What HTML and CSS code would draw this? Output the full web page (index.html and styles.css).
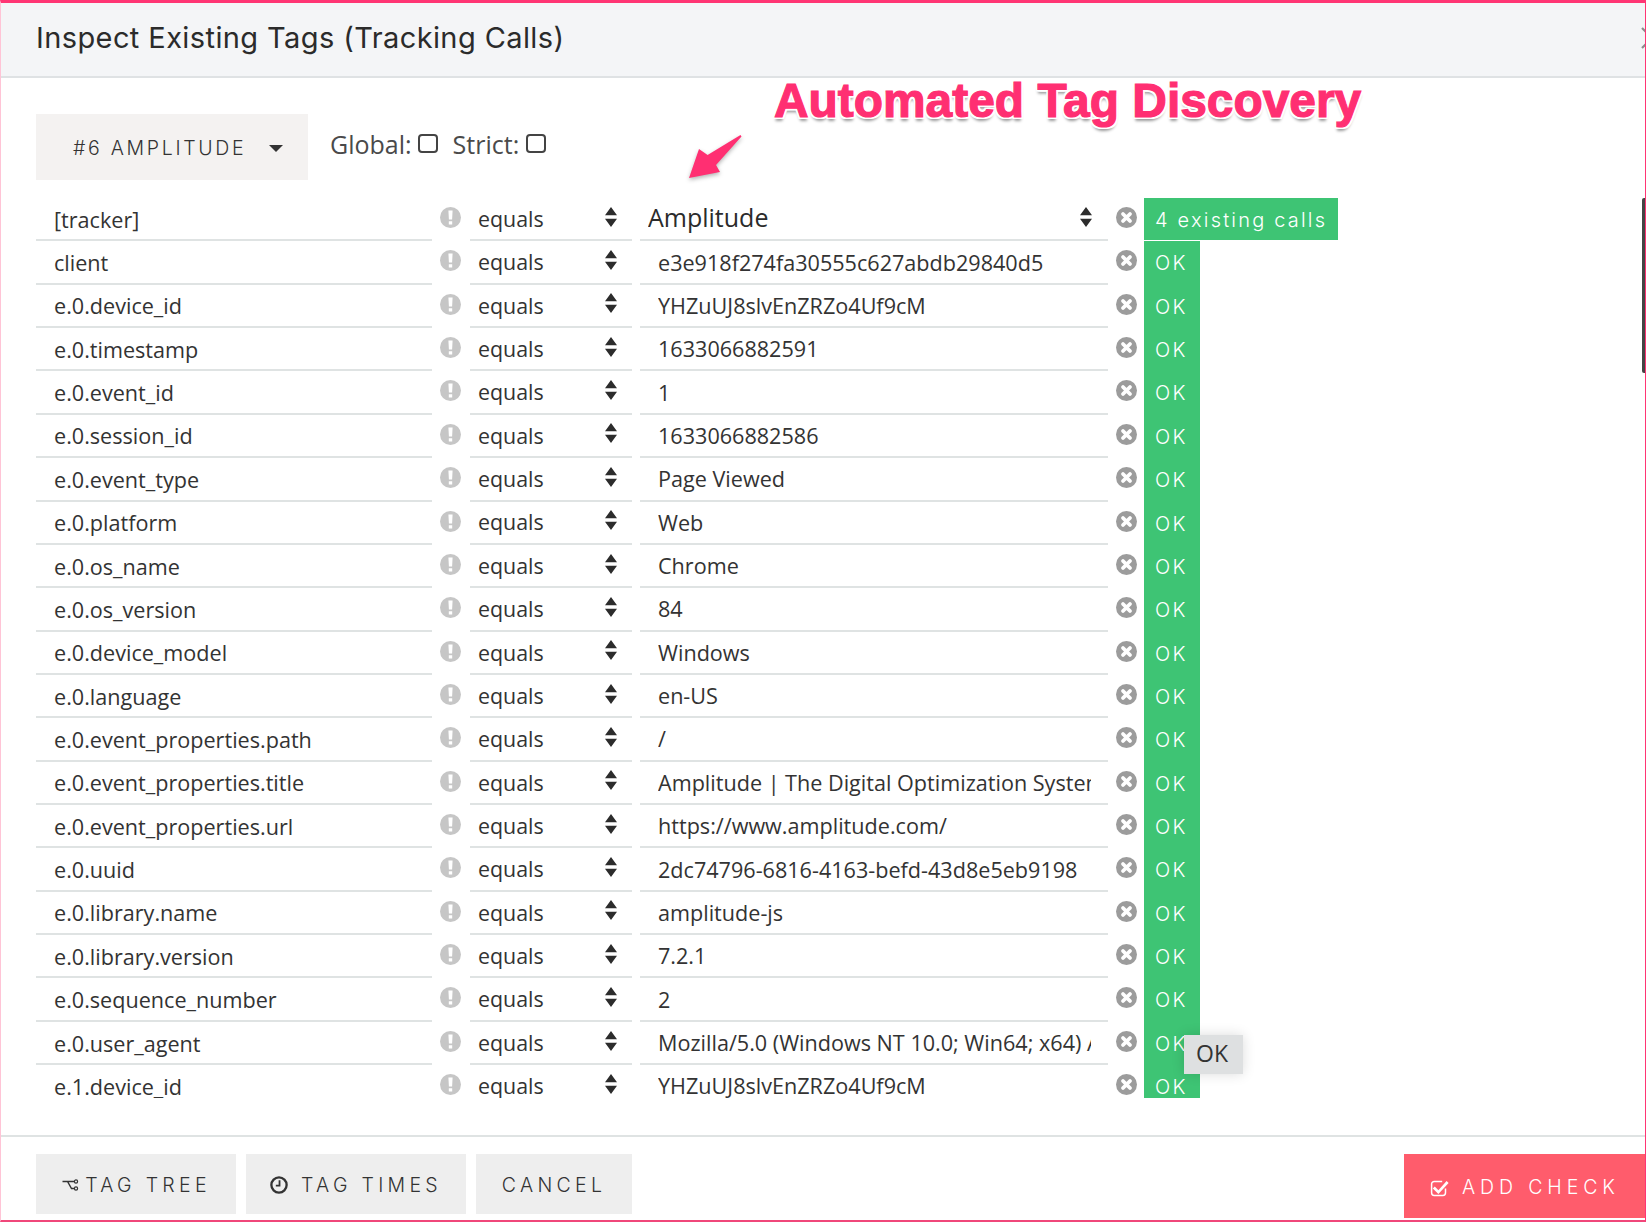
FILE: index.html
```html
<!DOCTYPE html>
<html lang="en">
<head>
<meta charset="utf-8">
<title>Inspect Existing Tags</title>
<link rel="stylesheet" href="styles.css">
</head>
<body>
<svg class="defs" width="0" height="0" aria-hidden="true">
  <symbol id="warn" viewBox="0 0 21 21"><circle cx="10.5" cy="10.5" r="10.5" fill="#c6c6c6"/><path d="M8.4 3.4h4.2l-.5 9.2H8.9zM8.8 14.2h3.4v3.4H8.8z" fill="#fff"/></symbol>
  <symbol id="del" viewBox="0 0 21 21"><circle cx="10.5" cy="10.5" r="10.5" fill="#9c9c9c"/><path d="M7 7l7 7M14 7l-7 7" stroke="#fff" stroke-width="3.8" stroke-linecap="round"/></symbol>
  <symbol id="sort" viewBox="0 0 12 20"><path d="M6 0l6 8.2H0zM0 11.8h12L6 20z" fill="#2c2c2c"/></symbol>
</svg>
<main class="modal">
  <header class="head">
    <h1 class="title">Inspect Existing Tags (Tracking Calls)</h1>
    <svg class="close" width="24" height="24" viewBox="0 0 24 24"><path d="M2 2l20 20M22 2L2 22" stroke="#8c8c8c" stroke-width="2.2"/></svg>
  </header>

  <div class="annotation">Automated Tag Discovery</div>
  <svg class="arrow" width="60" height="56" viewBox="0 0 60 56"><path d="M53.5 3L54.5 4.5 29 33 33 40 2 46 12 17 20.6 23z" fill="#ff2f72"/></svg>
  <div class="scrollbar"></div>

  <section class="toolbar">
    <div class="dropdown">#6 AMPLITUDE<span class="caret"></span></div>
    <label class="check">Global:<span class="box"></span></label>
    <label class="check">Strict:<span class="box"></span></label>
  </section>

  <section class="table">
    <div class="row"><div class="name">[tracker]</div><svg class="ic"><use href="#warn"/></svg><div class="op">equals<svg class="sort"><use href="#sort"/></svg></div><div class="value first"><span class="val">Amplitude</span><svg class="sort"><use href="#sort"/></svg></div><svg class="ic"><use href="#del"/></svg><div class="status">4 existing calls</div></div>
    <div class="row"><div class="name">client</div><svg class="ic"><use href="#warn"/></svg><div class="op">equals<svg class="sort"><use href="#sort"/></svg></div><div class="value"><span class="val">e3e918f274fa30555c627abdb29840d5</span></div><svg class="ic"><use href="#del"/></svg><div class="status">OK</div></div>
    <div class="row"><div class="name">e.0.device_id</div><svg class="ic"><use href="#warn"/></svg><div class="op">equals<svg class="sort"><use href="#sort"/></svg></div><div class="value"><span class="val">YHZuUJ8slvEnZRZo4Uf9cM</span></div><svg class="ic"><use href="#del"/></svg><div class="status">OK</div></div>
    <div class="row"><div class="name">e.0.timestamp</div><svg class="ic"><use href="#warn"/></svg><div class="op">equals<svg class="sort"><use href="#sort"/></svg></div><div class="value"><span class="val">1633066882591</span></div><svg class="ic"><use href="#del"/></svg><div class="status">OK</div></div>
    <div class="row"><div class="name">e.0.event_id</div><svg class="ic"><use href="#warn"/></svg><div class="op">equals<svg class="sort"><use href="#sort"/></svg></div><div class="value"><span class="val">1</span></div><svg class="ic"><use href="#del"/></svg><div class="status">OK</div></div>
    <div class="row"><div class="name">e.0.session_id</div><svg class="ic"><use href="#warn"/></svg><div class="op">equals<svg class="sort"><use href="#sort"/></svg></div><div class="value"><span class="val">1633066882586</span></div><svg class="ic"><use href="#del"/></svg><div class="status">OK</div></div>
    <div class="row"><div class="name">e.0.event_type</div><svg class="ic"><use href="#warn"/></svg><div class="op">equals<svg class="sort"><use href="#sort"/></svg></div><div class="value"><span class="val">Page Viewed</span></div><svg class="ic"><use href="#del"/></svg><div class="status">OK</div></div>
    <div class="row"><div class="name">e.0.platform</div><svg class="ic"><use href="#warn"/></svg><div class="op">equals<svg class="sort"><use href="#sort"/></svg></div><div class="value"><span class="val">Web</span></div><svg class="ic"><use href="#del"/></svg><div class="status">OK</div></div>
    <div class="row"><div class="name">e.0.os_name</div><svg class="ic"><use href="#warn"/></svg><div class="op">equals<svg class="sort"><use href="#sort"/></svg></div><div class="value"><span class="val">Chrome</span></div><svg class="ic"><use href="#del"/></svg><div class="status">OK</div></div>
    <div class="row"><div class="name">e.0.os_version</div><svg class="ic"><use href="#warn"/></svg><div class="op">equals<svg class="sort"><use href="#sort"/></svg></div><div class="value"><span class="val">84</span></div><svg class="ic"><use href="#del"/></svg><div class="status">OK</div></div>
    <div class="row"><div class="name">e.0.device_model</div><svg class="ic"><use href="#warn"/></svg><div class="op">equals<svg class="sort"><use href="#sort"/></svg></div><div class="value"><span class="val">Windows</span></div><svg class="ic"><use href="#del"/></svg><div class="status">OK</div></div>
    <div class="row"><div class="name">e.0.language</div><svg class="ic"><use href="#warn"/></svg><div class="op">equals<svg class="sort"><use href="#sort"/></svg></div><div class="value"><span class="val">en-US</span></div><svg class="ic"><use href="#del"/></svg><div class="status">OK</div></div>
    <div class="row"><div class="name">e.0.event_properties.path</div><svg class="ic"><use href="#warn"/></svg><div class="op">equals<svg class="sort"><use href="#sort"/></svg></div><div class="value"><span class="val">/</span></div><svg class="ic"><use href="#del"/></svg><div class="status">OK</div></div>
    <div class="row"><div class="name">e.0.event_properties.title</div><svg class="ic"><use href="#warn"/></svg><div class="op">equals<svg class="sort"><use href="#sort"/></svg></div><div class="value"><span class="val">Amplitude | The Digital Optimization System</span></div><svg class="ic"><use href="#del"/></svg><div class="status">OK</div></div>
    <div class="row"><div class="name">e.0.event_properties.url</div><svg class="ic"><use href="#warn"/></svg><div class="op">equals<svg class="sort"><use href="#sort"/></svg></div><div class="value"><span class="val">https://www.amplitude.com/</span></div><svg class="ic"><use href="#del"/></svg><div class="status">OK</div></div>
    <div class="row"><div class="name">e.0.uuid</div><svg class="ic"><use href="#warn"/></svg><div class="op">equals<svg class="sort"><use href="#sort"/></svg></div><div class="value"><span class="val">2dc74796-6816-4163-befd-43d8e5eb9198</span></div><svg class="ic"><use href="#del"/></svg><div class="status">OK</div></div>
    <div class="row"><div class="name">e.0.library.name</div><svg class="ic"><use href="#warn"/></svg><div class="op">equals<svg class="sort"><use href="#sort"/></svg></div><div class="value"><span class="val">amplitude-js</span></div><svg class="ic"><use href="#del"/></svg><div class="status">OK</div></div>
    <div class="row"><div class="name">e.0.library.version</div><svg class="ic"><use href="#warn"/></svg><div class="op">equals<svg class="sort"><use href="#sort"/></svg></div><div class="value"><span class="val">7.2.1</span></div><svg class="ic"><use href="#del"/></svg><div class="status">OK</div></div>
    <div class="row"><div class="name">e.0.sequence_number</div><svg class="ic"><use href="#warn"/></svg><div class="op">equals<svg class="sort"><use href="#sort"/></svg></div><div class="value"><span class="val">2</span></div><svg class="ic"><use href="#del"/></svg><div class="status">OK</div></div>
    <div class="row"><div class="name">e.0.user_agent</div><svg class="ic"><use href="#warn"/></svg><div class="op">equals<svg class="sort"><use href="#sort"/></svg></div><div class="value"><span class="val">Mozilla/5.0 (Windows NT 10.0; Win64; x64) AppleWebKit/537.36</span></div><svg class="ic"><use href="#del"/></svg><div class="status">OK</div></div>
    <div class="row"><div class="name">e.1.device_id</div><svg class="ic"><use href="#warn"/></svg><div class="op">equals<svg class="sort"><use href="#sort"/></svg></div><div class="value"><span class="val">YHZuUJ8slvEnZRZo4Uf9cM</span></div><svg class="ic"><use href="#del"/></svg><div class="status">OK</div></div>
    <div class="tooltip">OK</div>
  </section>

  <footer class="foot">
    <div class="actions">
      <button class="btn tree"><svg class="btn-ic" width="18" height="13" viewBox="0 0 17 13"><path d="M1 2.5h5l4 7h3M6.5 2.5H13" fill="none" stroke="#333" stroke-width="1.4"/><circle cx="14.5" cy="2.5" r="1.6" fill="none" stroke="#333" stroke-width="1.2"/><circle cx="14.5" cy="9.5" r="1.6" fill="none" stroke="#333" stroke-width="1.2"/></svg>TAG TREE</button>
      <button class="btn times"><svg class="btn-ic" width="18" height="18" viewBox="0 0 17 17"><circle cx="8.5" cy="8.5" r="7.2" fill="none" stroke="#333" stroke-width="2.2"/><path d="M9 4v5H5.5" fill="none" stroke="#333" stroke-width="1.7"/></svg>TAG TIMES</button>
      <button class="btn cancel">CANCEL</button>
    </div>
    <button class="add"><svg width="19" height="19" viewBox="0 0 19 19"><path d="M15.5 10.5v4.3a2.6 2.6 0 0 1-2.6 2.6H4.2a2.6 2.6 0 0 1-2.6-2.6V6a2.6 2.6 0 0 1 2.6-2.6h8" fill="none" stroke="#fff" stroke-width="1.5"/><path d="M4.8 8.6l3.6 3.6L16.6 3l2 2-10.2 11-5.6-5.4z" fill="#fff"/></svg>ADD CHECK</button>
  </footer>
</main>
</body>
</html>
```
FILE: styles.css
```css
* { box-sizing: border-box; }
html, body { margin: 0; padding: 0; }
body { background: #fff; font-family: "Open Sans", sans-serif; color: #333; }
.defs { position: absolute; }

.modal {
  position: relative;
  width: 1646px;
  height: 1222px;
  overflow: hidden;
  display: flex;
  flex-direction: column;
  border-top: 3px solid #ff3574;
  border-bottom: 2px solid #f0477a;
  border-left: 1px solid #ffc4d6;
  border-right: 1px solid #ff3574;
}

.head {
  position: relative;
  height: 75px;
  flex: none;
  background: #f4f5f7;
  border-bottom: 2px solid #dfe2e4;
  padding-left: 35px;
  display: flex;
  align-items: center;
  overflow: hidden;
}
.title {
  margin: 0 0 4px;
  font-family: Inter, sans-serif;
  font-weight: 400;
  font-size: 29px;
  letter-spacing: .4px;
  color: #2b2b2b;
}
.close { position: absolute; left: 1639px; top: 23px; }

.annotation {
  position: absolute;
  left: 773px;
  top: 68px;
  font-family: "Liberation Sans", sans-serif;
  font-weight: 700;
  font-size: 47.9px;
  line-height: 60px;
  white-space: nowrap;
  color: #ff2f72;
  -webkit-text-stroke: 1.2px #ff2f72;
  text-shadow:
    2px 0 0 #fff, -2px 0 0 #fff, 0 2px 0 #fff, 0 -2px 0 #fff,
    2px 2px 0 #fff, -2px 2px 0 #fff, 2px -2px 0 #fff, -2px -2px 0 #fff,
    0 4px 3px rgba(0,0,0,.4);
}
.arrow {
  position: absolute;
  left: 686px;
  top: 129px;
  filter: drop-shadow(0 2px 2px rgba(0,0,0,.3));
}
.scrollbar {
  position: absolute;
  left: 1641px;
  top: 195px;
  width: 4px;
  height: 175px;
  background: #444;
  border-radius: 2px 0 0 2px;
}

.toolbar {
  flex: none;
  margin-top: 36px;
  padding-left: 35px;
  height: 66px;
  display: flex;
  align-items: flex-start;
}
.dropdown {
  width: 272px;
  height: 66px;
  background: #f4f2f1;
  display: flex;
  align-items: center;
  padding: 2px 0 0 37px;
  font-family: Inter, sans-serif;
  font-weight: 300;
  font-size: 19.5px;
  letter-spacing: 2.7px;
  color: #333;
}
.caret {
  margin-left: 23px;
  border-left: 7px solid transparent;
  border-right: 7px solid transparent;
  border-top: 7px solid #333;
  margin-top: 1px;
}
.check {
  display: flex;
  align-items: center;
  height: 60px;
  margin-left: 22px;
  font-size: 25px;
  color: #4a4a4a;
}
.check + .check { margin-left: 15px; }
.box {
  width: 20px;
  height: 19px;
  margin-left: 6px;
  margin-top: -1px;
  border: 2px solid #444;
  border-radius: 4px;
}
.check + .check .box { margin-left: 7px; }

.table {
  position: relative;
  flex: none;
  margin-top: 18px;
  height: 900px;
  overflow: hidden;
}
.row {
  display: grid;
  grid-template-columns: 396px 38px 162px 476px 36px auto;
  justify-content: start;
  margin-left: 35px;
  height: 43.37px;
  font-size: 21.6px;
  color: #333;
}
.name, .op, .value {
  display: flex;
  align-items: center;
  white-space: nowrap;
  overflow: hidden;
  border-bottom: 2px solid #dfe3e3;
}
.name { padding: 1px 0 0 18px; }
.op { padding: 0 15px 0 8px; justify-content: space-between; font-size: 21.4px; line-height: 1; }
.value { margin-left: 8px; padding-left: 18px; padding-right: 17px; font-size: 21.6px; }
.val { display: block; flex: 1; min-width: 0; overflow: hidden; }
.value.first { font-size: 25px; padding: 0 16px 3px 8px; color: #2b2b2b; }
.value.first .sort { margin-top: 0; }
.ic { width: 21px; height: 21px; justify-self: center; margin-top: 9px; }
.name + .ic { margin-right: 2px; }
.sort { width: 12px; height: 20px; flex: none; margin-top: -4px; }
.status {
  justify-self: start;
  width: 56px;
  background: #3ec474;
  color: #fff;
  padding: 4px 11px 0;
  font-family: Inter, sans-serif;
  font-weight: 300;
  font-size: 20px;
  line-height: 36px;
  letter-spacing: 2.2px;
  white-space: nowrap;
}
.row:first-child .status { width: 194px; height: 42px; }
.tooltip {
  position: absolute;
  left: 1183px;
  top: 837px;
  width: 59px;
  height: 39px;
  padding-right: 3px;
  background: #dee0e1;
  color: #333;
  font-size: 23px;
  line-height: 37px;
  text-align: center;
  box-shadow: 0 0 12px rgba(0,0,0,.14);
}

.foot {
  flex: none;
  margin-top: 37px;
  border-top: 2px solid #dfe3e3;
  padding: 17px 0 0 35px;
  display: flex;
  justify-content: space-between;
  align-items: flex-start;
}
.actions { display: flex; gap: 10px; }
.btn {
  height: 60px;
  border: 0;
  background: #eee;
  display: flex;
  align-items: center;
  justify-content: center;
  font-family: Inter, sans-serif;
  font-weight: 300;
  font-size: 19.5px;
  letter-spacing: 4.3px;
  color: #333;
  padding: 2px 0 0;
}
.tree { width: 200px; }
.times { width: 220px; }
.cancel { width: 156px; }
.tree .btn-ic { margin-right: 6px; }
.times .btn-ic { margin-right: 13px; }
.add {
  width: 241px;
  height: 64px;
  border: 0;
  background: #ff5c6c;
  color: #fff;
  display: flex;
  align-items: center;
  padding: 2px 0 0 26px;
  font-family: Inter, sans-serif;
  font-weight: 300;
  font-size: 19.5px;
  letter-spacing: 4.9px;
}
.add svg { margin-right: 13px; flex: none; }
```
